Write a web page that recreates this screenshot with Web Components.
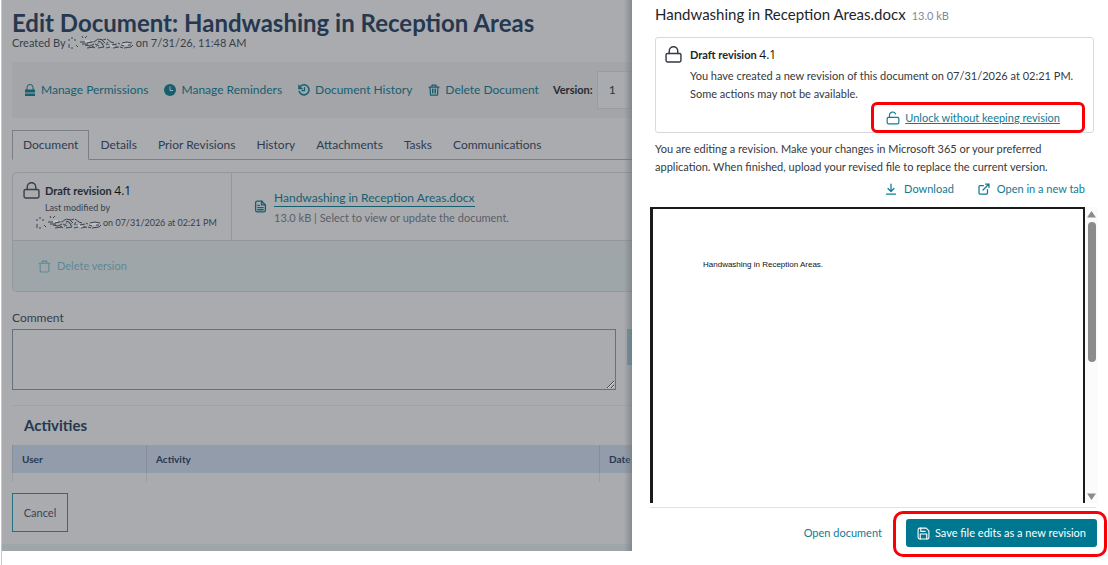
<!DOCTYPE html>
<html lang="en">
<head>
<meta charset="utf-8">
<meta name="viewport" content="width=device-width, initial-scale=1">
<title>Edit Document</title>
<style>
  html, body { height: 100%; }
  body {
    margin: 0;
    background: #fff;
    font: 12px/18px Lato, "Liberation Sans", sans-serif;
    color: #3a3f49;
    --teal-dim: #165f6f;
    --navy-dim: #26384f;
    --line-dim: #94989d;
    --page-dim: #a9abaf;
    --teal: #127a92;
    --line: #d5dadf;
  }
</style>
</head>
<body>
<app-shell>
  <document-page></document-page>
  <edit-drawer slot="drawer"></edit-drawer>
</app-shell>

<script>
const define = (name, html, setup) => {
  const template = document.createElement('template');
  template.innerHTML = html;
  customElements.define(name, class extends HTMLElement {
    constructor() {
      super();
      this.attachShadow({ mode: 'open' }).append(template.content.cloneNode(true));
    }
    connectedCallback() { if (setup) setup(this, this.shadowRoot); }
  });
};

const stroke = (width, body, box = 24) =>
  `<svg viewBox="0 0 ${box} ${box}" fill="none" stroke="currentColor" stroke-width="${width}" stroke-linecap="round" stroke-linejoin="round" aria-hidden="true">${body}</svg>`;
const ICONS = {
  'lock-solid': stroke(2, '<path d="M6 12V7a6 6 0 0 1 12 0v5"/><path d="M2 11h20v6H2zM2 19h20v5H2z" fill="currentColor" stroke="none"/>'),
  clock: stroke(2, '<circle cx="12" cy="12" r="12" fill="currentColor" stroke="none"/><path d="M12 5v8h6" stroke="#a9abaf" stroke-linecap="butt"/>'),
  history: stroke(3, '<path d="M5 4.500A10 10 0 1 1 2.500 15"/><path d="M1 2v8h8z" fill="currentColor" stroke-width="1"/><path d="M13 7v6H8" stroke-width="2.500"/>'),
  'trash-solid': stroke(2.5, '<path d="M2 6h20M8 5V2h8v3M4 6l1 16h14l1-16"/><path d="M9 10v8M12 10v8M15 10v8" stroke-width="2"/>'),
  trash: stroke(2, '<path d="M2 6h20M8 6V2h8v4M4 6v14a2 2 0 0 0 2 2h12a2 2 0 0 0 2-2V6"/>'),
  file: stroke(2.5, '<path d="M14 2H6a3 3 0 0 0-3 3v14a3 3 0 0 0 3 3h12a3 3 0 0 0 3-3V9z"/><path d="M14 2v7h7M7 10h3M7 14h10M7 18h10"/>'),
  lock: stroke(2, '<rect x="1.500" y="10.500" width="21" height="12" rx="2"/><path d="M6 10.500V7a6 6 0 0 1 12 0v3.500"/>'),
  unlock: stroke(2, '<rect x="2" y="11" width="20" height="11" rx="2"/><path d="M6 11V7a5.500 5.500 0 0 1 10.500-2"/>'),
  download: stroke(2.5, '<path d="M12 2v15M6 11l6 6 6-6M3 22h18"/>'),
  external: stroke(2.5, '<path d="M11 5H4a2 2 0 0 0-2 2v13a2 2 0 0 0 2 2h13a2 2 0 0 0 2-2v-7M15 2h7v7M22 2L10 14"/>'),
  save: stroke(2, '<path d="M17 2H5a3 3 0 0 0-3 3v14a3 3 0 0 0 3 3h14a3 3 0 0 0 3-3V7z"/><path d="M7 2v6h8M6 22v-9h12v9"/>'),
};
define('ui-icon', `<style>
  :host { display: inline-block; flex: none; width: var(--size, 13px); height: var(--size, 13px); }
  svg { display: block; width: 100%; height: 100%; }
</style><span></span>`, (el, root) => {
  root.querySelector('span').innerHTML = ICONS[el.getAttribute('name')];
});

define('masked-name', `<style>
  :host { display: inline-block; width: 66px; height: 14px; vertical-align: middle; }
  svg { display: block; width: 100%; height: 100%; }
</style>
<svg viewBox="0 0 66 14" fill="none" aria-hidden="true">
  <g stroke="#d3d5d9"><path d="M17 5h8M29 3l7 1M40 8l8 4M54 8h8"/></g>
  <g stroke="#3f434b" stroke-width="1">
    <path d="M1 12V8M1 5V3M4 1v2M6 4h2M3 12h2M8 9l2 2M14 0l1 2M17 2l2-2M12 6h5M14 8h6M19 7l5-1M17 9l5 1 4-2M19 12l7-1M24 10l3 2"/>
    <path d="M26 6l4-3 5 1 3-1M27 8l4 2M30 5l3 1 3 5M33 3l4 4M30 12l6-1M39 3l4 3 3 1M40 6l-2 3M38 12l4-1M44 9l5-1M45 12l6-1M50 7l2 1M54 7l5-1 5 1M53 9l3 1M56 12l7-1 2-2M52 11l3 1M60 9h3"/>
  </g>
  <g stroke="#5f7183"><path d="M22 5l4 1M28 11l3-5M42 9l-4-1M47 10l3 1M34 7l2 1"/></g>
</svg>`);

/* Red frame that calls attention to the control it wraps. */
define('call-out', `<style>
  :host { display: flex; position: relative; }
  i { position: absolute; inset: var(--reach, -8px); border: 3px solid #f80006; border-radius: var(--round, 8px); pointer-events: none; }
</style><slot></slot><i></i>`);

define('app-shell', `<style>
  :host { display: block; box-sizing: border-box; min-height: 100%; margin-left: 1px; border-left: 1px solid #c3c6cb; }
  main { display: grid; grid-template-columns: minmax(0, 1fr) 476px; }
  .page { overflow: hidden; }
  .drawer { position: relative; background: #fff; }
  .drawer::before { content: ""; position: absolute; top: 0; bottom: 0; right: 100%; width: 8px; background: linear-gradient(90deg, #70747900, #70747999); }
</style>
<main><div class="page"><slot></slot></div><div class="drawer"><slot name="drawer"></slot></div></main>`);

define('document-page', `<style>
  :host { display: flex; flex-direction: column; box-sizing: border-box; min-height: 551px; padding: 10px 0 0 10px; background: var(--page-dim); white-space: nowrap; }
  h1 { margin: 0; font-size: 24px; line-height: 26px; font-weight: 700; color: var(--navy-dim); }
  .meta { margin: 0; font-size: 11px; line-height: 14px; height: 14px; display: flex; gap: 2px; align-items: center; }
  action-bar, tab-list, version-card { margin-top: 12px; }
  comment-box { margin-top: 17px; }
  activity-table { margin-top: 15px; }
  button { align-self: flex-start; box-sizing: border-box; width: 56px; height: 39px; margin-top: 11px; padding: 0; border: 1px solid #24707e; background: none; font: inherit; font-size: 11px; color: #3a4454; }
  .strip { height: 7px; margin: auto 0 0 -10px; background: #9fa6aa; }
</style>
<h1>Edit Document: Handwashing in Reception Areas</h1>
<p class="meta"><span>Created By</span><masked-name></masked-name><span>on 7/31/26, 11:48 AM</span></p>
<action-bar></action-bar>
<tab-list></tab-list>
<version-card></version-card>
<comment-box></comment-box>
<activity-table></activity-table>
<button type="button">Cancel</button>
<div class="strip"></div>`);

define('action-bar', `<style>
  :host { display: flex; align-items: center; height: 56px; padding-left: 12px; background: #a3a5a9; }
  a { display: flex; align-items: center; gap: 5px; margin-right: 16px; color: var(--teal-dim); text-decoration: none; --size: 12px; }
  label { display: flex; align-items: center; gap: 4px; font-size: 11px; font-weight: 700; color: #272b33; margin: 0 -80px 0 -2px; }
  select { appearance: none; box-sizing: border-box; width: 80px; height: 38px; margin: 0; padding: 0 11px; border: 1px solid #999ca1; border-radius: 0; background: linear-gradient(90deg, var(--page-dim) 30px, #a3a5a9 30px); font: inherit; font-size: 12px; font-weight: 400; color: #30353f; }
</style>
<a href="#permissions"><ui-icon name="lock-solid"></ui-icon>Manage Permissions</a>
<a href="#reminders"><ui-icon name="clock"></ui-icon>Manage Reminders</a>
<a href="#history"><ui-icon name="history"></ui-icon>Document History</a>
<a href="#delete"><ui-icon name="trash-solid"></ui-icon>Delete Document</a>
<label>Version: <select><option>1</option></select></label>`);

define('tab-list', `<style>
  :host { display: flex; height: 29px; border-bottom: 1px solid #7b7f85; }
  a { box-sizing: border-box; height: 30px; padding: 5px 10px 0 11px; border: solid transparent; border-width: 1px 0; color: #2f3c50; text-decoration: none; }
  a.on { padding: 5px 10px 0; border: 1px solid #7b7f85; border-bottom-color: var(--page-dim); background: var(--page-dim); }
</style>
<a class="on" href="#document">Document</a><a href="#details">Details</a><a href="#prior">Prior Revisions</a><a href="#history">History</a><a href="#attachments">Attachments</a><a href="#tasks">Tasks</a><a href="#communications">Communications</a>`);

define('version-card', `<style>
  :host { display: block; border: 1px solid var(--line-dim); border-right: 0; border-radius: 5px 0 0 5px; overflow: hidden; }
  .top { display: grid; grid-template-columns: 219px 1fr; height: 67px; }
  .rev { display: grid; grid-template-columns: 32px 1fr; align-content: start; box-sizing: border-box; padding-top: 9px; border-right: 1px solid var(--line-dim); font-size: 9px; line-height: 15px; }
  .rev ui-icon { --size: 17px; margin-left: 10px; }
  h2 { margin: 0; font-size: 11px; line-height: 18px; font-weight: 700; color: #272b33; }
  h2 span { font: 12px "Open Sans", sans-serif; line-height: 1; color: #111; }
  .rev p { margin: 0; }
  .by { display: flex; align-items: center; grid-column: 1 / -1; gap: 1px; padding-left: 23px; }
  .file { display: flex; align-items: center; gap: 7px; padding-left: 22px; }
  .file ui-icon { --size: 13px; color: var(--teal-dim); }
  .file a { display: inline-block; line-height: 17px; border-bottom: 1px solid var(--teal-dim); color: var(--teal-dim); text-decoration: none; }
  .file p { margin: 3px 0 0; font-size: 11px; line-height: 15px; color: #5a5f67; }
  .foot { display: flex; align-items: center; height: 50px; border-top: 1px solid var(--line-dim); padding-left: 25px; background: #9fa6aa; }
  .foot button { display: flex; align-items: center; gap: 6px; padding: 0; border: 0; background: none; font: inherit; font-size: 11px; color: #5d8995; }
</style>
<div class="top">
  <div class="rev"><ui-icon name="lock"></ui-icon><div><h2>Draft revision <span>4.1</span></h2><p>Last modified by</p></div>
    <p class="by"><masked-name></masked-name><span>on 07/31/2026 at 02:21 PM</span></p></div>
  <div class="file"><ui-icon name="file"></ui-icon><div><a href="#file">Handwashing in Reception Areas.docx</a><p>13.0 kB | Select to view or update the document.</p></div></div>
</div>
<div class="foot"><button type="button" disabled><ui-icon name="trash"></ui-icon>Delete version</button></div>`);

define('comment-box', `<style>
  :host { display: grid; grid-template-columns: 1fr 5px; column-gap: 11px; }
  label { grid-column: 1 / -1; line-height: 18px; padding-bottom: 2px; color: #343d4b; }
  textarea { box-sizing: border-box; width: 100%; height: 61px; margin: 0; border: 1px solid #667180; border-radius: 0; background: none; font: inherit; resize: vertical; display: block; }
  button { height: 36px; padding: 0; border: 0; background: #6f949b; }
</style>
<label for="comment">Comment</label><textarea id="comment"></textarea><button type="button" aria-label="Add comment"></button>`);

define('activity-table', `<style>
  :host { display: block; border-top: 1px solid #a0a2a6; }
  h2 { margin: 0; padding: 10px 12px; font-size: 15px; line-height: 19px; font-weight: 700; color: var(--navy-dim); }
  table { width: calc(100% + 80px); border-collapse: separate; border-spacing: 0; table-layout: fixed; }
  th { box-sizing: border-box; height: 28px; padding: 0 9px; border-left: 1px solid #868f99; background: #939caa; font-size: 10px; line-height: 16px; font-weight: 700; text-align: left; color: var(--navy-dim); }
  td { height: 9px; padding: 0; border-left: 1px solid #9c9ea3; }
  .user { width: 134px; } .date { width: 113px; }
</style>
<h2>Activities</h2>
<table><thead><tr><th class="user">User</th><th>Activity</th><th class="date">Date</th></tr></thead>
<tbody><tr><td></td><td></td><td></td></tr></tbody></table>`);

define('edit-drawer', `<style>
  :host { display: flex; flex-direction: column; color: #343940; font-size: 11px; line-height: 18px; padding: 4px 10px 0 18px; }
  header { display: flex; align-items: baseline; gap: 6px; padding-left: 5px; line-height: 20px; }
  h1 { margin: 0; font-size: 15px; font-weight: 400; color: #1f242b; }
  header span { font-size: 11px; color: #7d8b9d; }
  .intro { margin: 7px 12px 0 5px; }
  a { color: var(--teal); }
  .links { display: flex; justify-content: flex-end; gap: 24px; margin: 4px 13px 0 0; }
  .links a { display: flex; align-items: center; gap: 7px; text-decoration: none; }
  .links ui-icon { --size: 12px; }
  revision-notice { margin: 11px 4px 0 5px; }
  document-viewer { margin-top: 9px; }
  footer { display: flex; align-items: center; justify-content: flex-end; gap: 24px; margin: 4px 2px 0 0; padding: 11px 0 4px; border-top: 1px solid #dfe2e8; }
  footer > a { text-decoration: none; }
  call-out { --reach: -8px -10px -10px -13px; --round: 10px; margin-right: -1px; }
  button { display: flex; align-items: center; gap: 5px; height: 28px; padding: 0 11px; border: 0; border-radius: 3px; background: #007791; color: #fff; font: inherit; }
</style>
<header><h1>Handwashing in Reception Areas.docx</h1><span>13.0 kB</span></header>
<revision-notice></revision-notice>
<p class="intro">You are editing a revision. Make your changes in Microsoft 365 or your preferred<br>application. When finished, upload your revised file to replace the current version.</p>
<div class="links"><a href="#download"><ui-icon name="download"></ui-icon>Download</a><a href="#open"><ui-icon name="external"></ui-icon>Open in a new tab</a></div>
<document-viewer><p>Handwashing in Reception Areas.</p></document-viewer>
<footer><a href="#document">Open document</a><call-out><button type="button"><ui-icon name="save"></ui-icon>Save file edits as a new revision</button></call-out></footer>`);

define('revision-notice', `<style>
  :host { display: grid; grid-template-columns: 25px 1fr; border: 1px solid var(--line); border-radius: 3px; padding: 8px 7px 5px 9px; }
  ui-icon { --size: 17px; }
  h2 { margin: 0 0 3px; font-size: 11px; line-height: 18px; font-weight: 700; color: #23272e; }
  h2 span { font: 12px "Open Sans", sans-serif; line-height: 1; color: #111; }
  p { margin: 0; }
  .unlock { grid-column: 1 / -1; display: flex; justify-content: flex-end; padding: 6px 26px 0 0; }
  call-out { --reach: -7px -25px -6px -15px; --round: 6px; }
  a { display: flex; align-items: center; gap: 5px; color: var(--teal); text-decoration: none; }
  a span { text-decoration: underline; }
  a ui-icon { --size: 14px; }
</style>
<ui-icon name="lock"></ui-icon>
<div><h2>Draft revision <span>4.1</span></h2><p>You have created a new revision of this document on 07/31/2026 at 02:21 PM.<br>Some actions may not be available.</p></div>
<div class="unlock"><call-out><a href="#unlock"><ui-icon name="unlock"></ui-icon><span>Unlock without keeping revision</span></a></call-out></div>`);

define('document-viewer', `<style>
  :host { display: flex; height: 296px; }
  .sheet { flex: 1; border: solid #1b1b1d; border-width: 2px 2px 0 3px; padding: 48px 50px; font: 8px/16px "Liberation Sans", sans-serif; color: #111; }
  ::slotted(p) { margin: 0; }
  .bar { display: flex; flex-direction: column; align-items: center; width: 13px; background: #fbfbfc; padding: 4px 0 3px; gap: 4px; box-sizing: border-box; }
  svg { width: 9px; height: 7px; fill: #8b8b8b; }
  .thumb { width: 8px; height: 140px; border-radius: 4px; background: #8b8b8b; }
  .down { margin-top: auto; }
</style>
<div class="sheet"><slot></slot></div>
<div class="bar"><svg viewBox="0 0 9 7"><path d="M4.500 0L9 6.500H0z"/></svg><div class="thumb"></div><svg class="down" viewBox="0 0 9 7"><path d="M4.500 7L9 .500H0z"/></svg></div>`);
</script>
</body>
</html>
